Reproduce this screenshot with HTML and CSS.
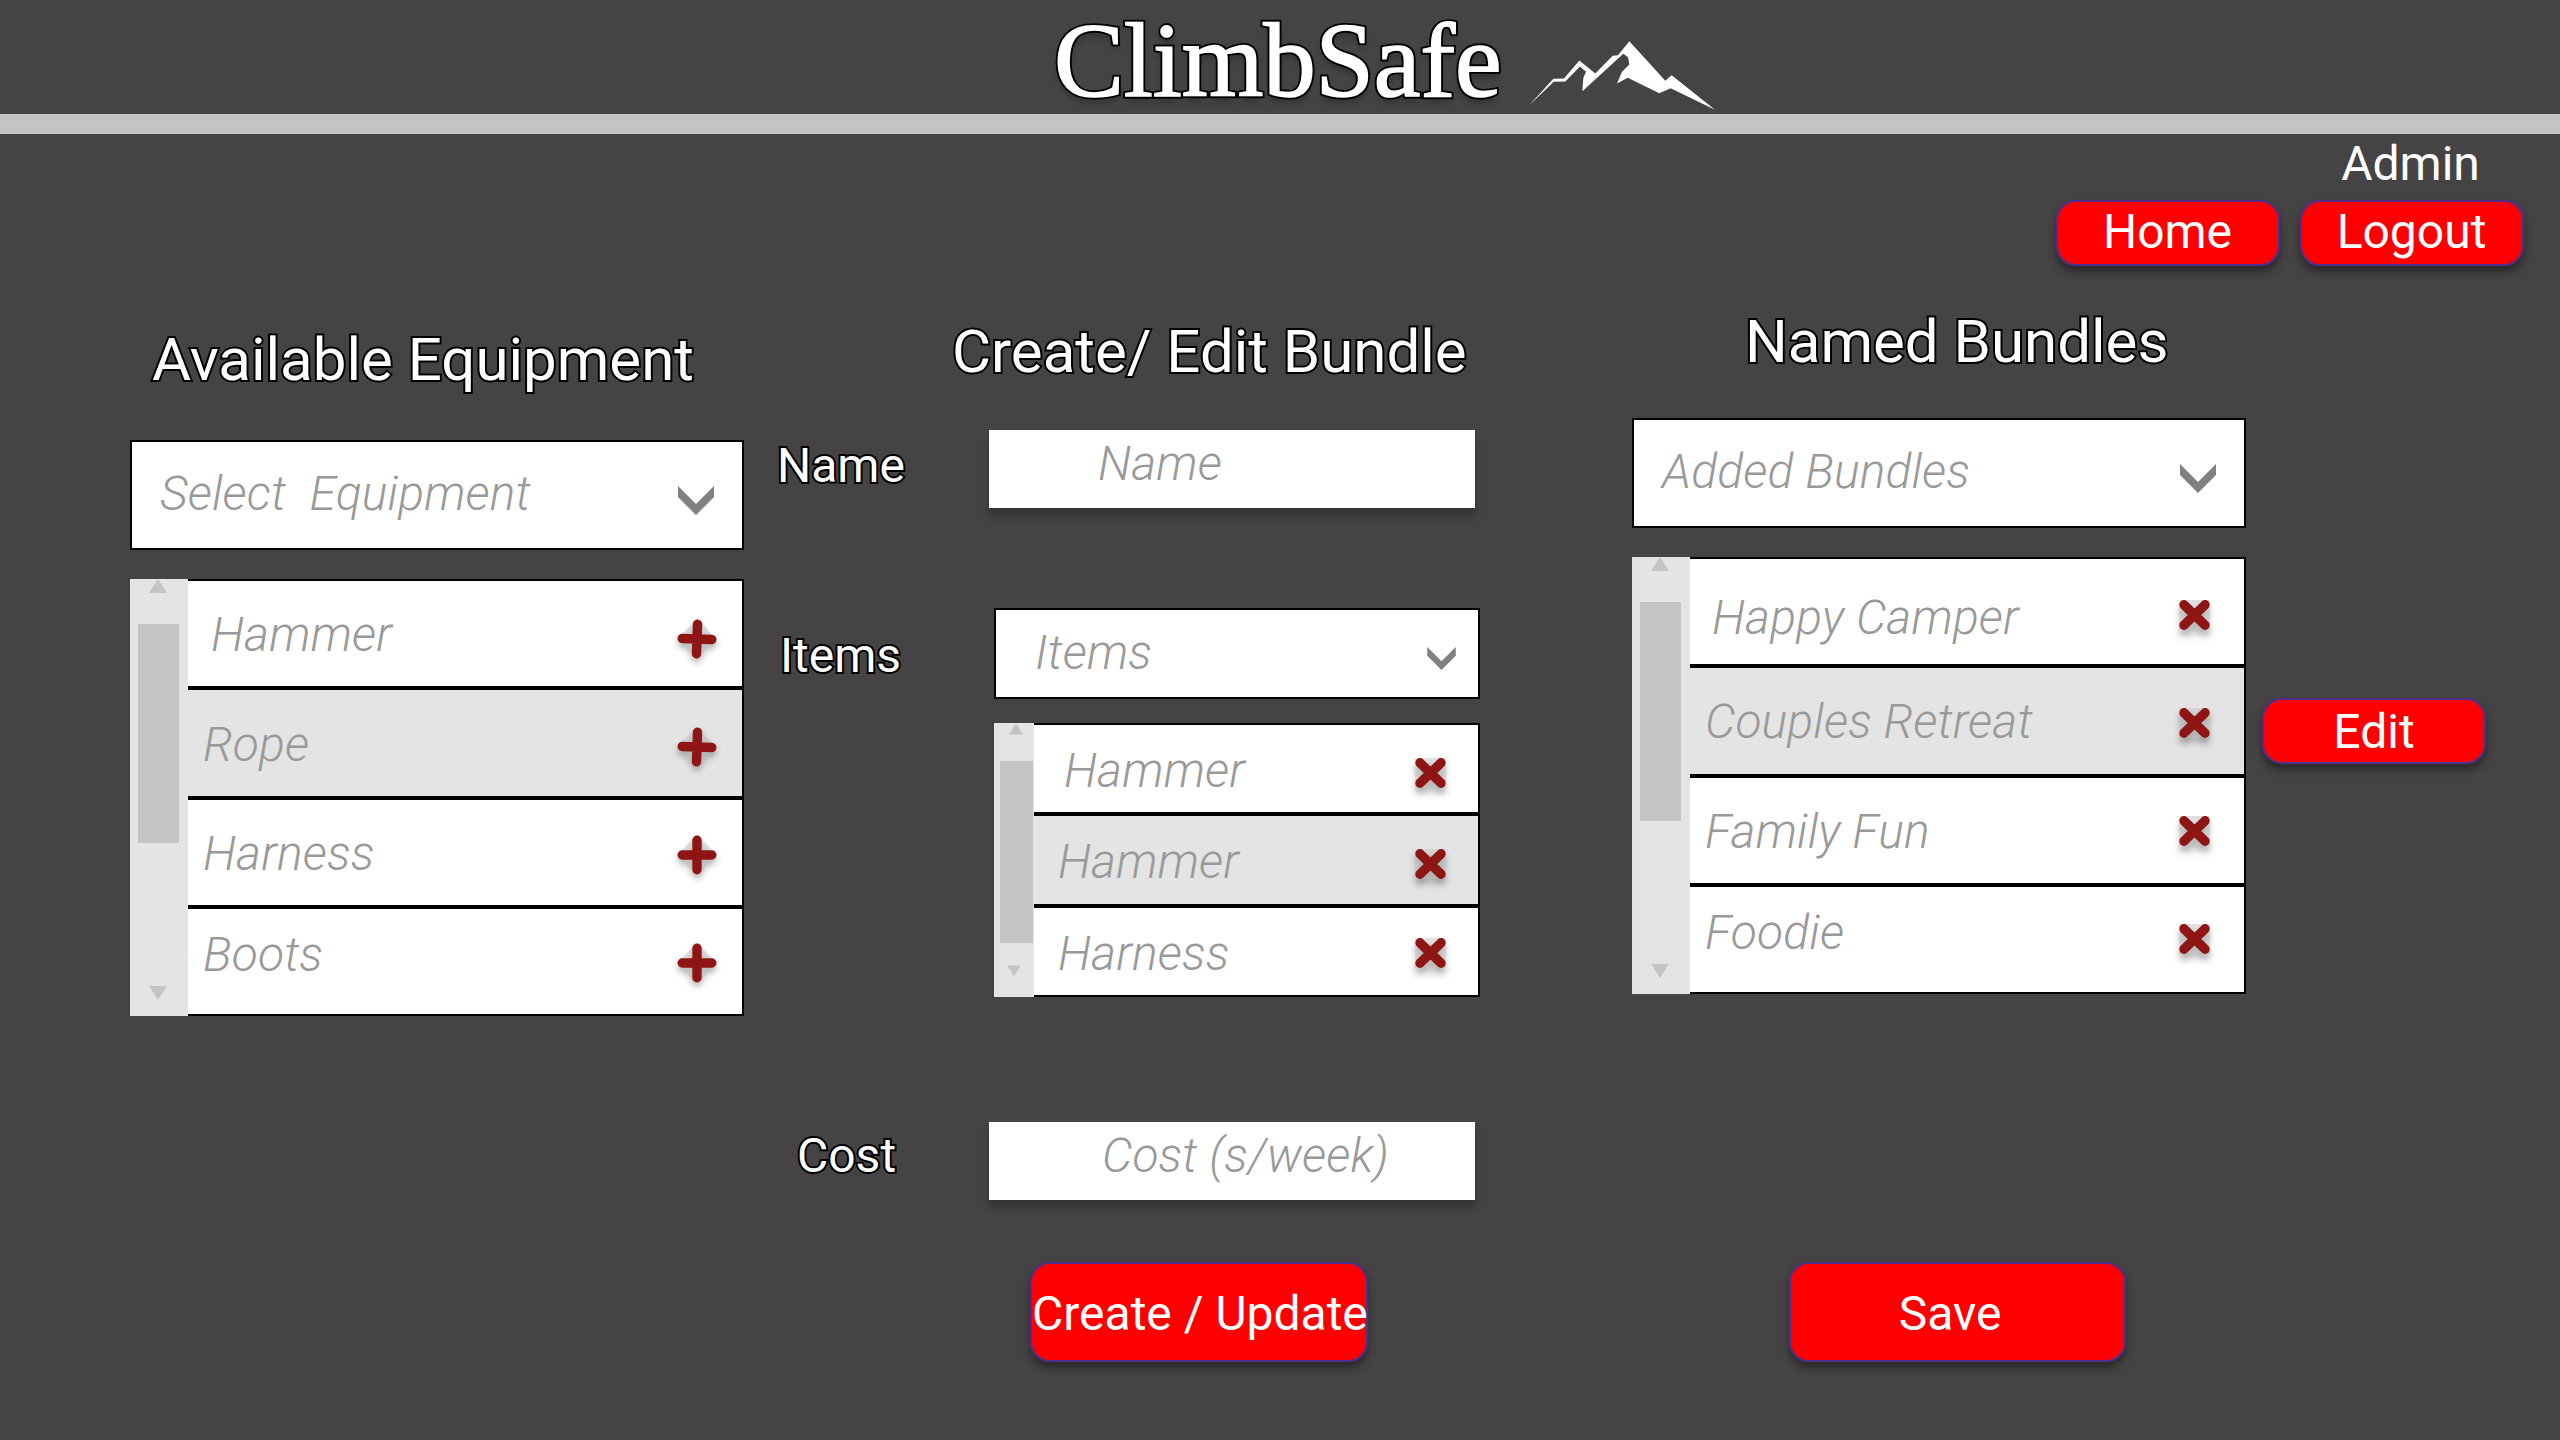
FILE: index.html
```html
<!DOCTYPE html>
<html lang="en">
<head>
<meta charset="utf-8">
<title>ClimbSafe</title>
<link rel="stylesheet" href="styles.css">
</head>
<body>
<svg class="sprite" aria-hidden="true">
  <symbol id="chevron" viewBox="0 0 36 29"><path d="M0 0 L18 18 L36 0 V11 L18 29 L0 11Z" fill="#808080"/></symbol>
  <symbol id="plus" viewBox="0 0 40 40"><path d="M20 0 L40 20 L20 40 L0 20Z" fill="#c4c4c4" fill-opacity=".5"/><path d="M20 5.2V34.8M5.2 20H34.8" stroke="#8f1515" stroke-width="9.4" stroke-linecap="round"/></symbol>
  <symbol id="cross" viewBox="0 0 31 30"><path d="M0 0H31V30H0Z" fill="#c4c4c4" fill-opacity=".5"/><path d="M5 4.8L26 25.2M26 4.8L5 25.2" stroke="#8f1515" stroke-width="9.4" stroke-linecap="round"/></symbol>
  <symbol id="arrow" viewBox="0 0 18 14"><path d="M9 0L18 14H0Z" fill="#c4c4c4"/></symbol>
</svg>
<header class="masthead">
  <h1 class="brand" data-name="ClimbSafe">ClimbSafe</h1>
  <svg class="mountain" viewBox="0 0 558 206"><path fill="#fff" transform="translate(-87 -65)" d="M87 258L160 178L192 177L238 123L286 162L338 109L354 107L388 65L496 184L515 167L645 271L512 206L478 221L383 175L351 192L366 157L388 135L384 113L370 103L247 215L250 175L258 157L240 141L196 186L161 187Z"/></svg>
</header>
<nav class="account">
  <button class="btn">Home</button>
  <div class="session">
    <span class="role">Admin</span>
    <button class="btn">Logout</button>
  </div>
</nav>
<main class="board">
  <section class="equipment">
    <h2>Available Equipment</h2>
    <div class="select"><span>Select&nbsp; Equipment</span><svg class="chev"><use href="#chevron"/></svg></div>
    <div class="list">
      <div class="scroll"><svg class="arrow"><use href="#arrow"/></svg><div class="thumb"></div><svg class="arrow down"><use href="#arrow"/></svg></div>
      <ul class="rows">
        <li><span>Hammer</span><svg class="plus tilt"><use href="#plus"/></svg></li>
        <li class="on"><span>Rope</span><svg class="plus tilt"><use href="#plus"/></svg></li>
        <li><span>Harness</span><svg class="plus"><use href="#plus"/></svg></li>
        <li><span>Boots</span><svg class="plus"><use href="#plus"/></svg></li>
      </ul>
    </div>
  </section>
  <section class="editor">
    <h2>Create/ Edit Bundle</h2>
    <div class="field"><label>Name</label><div class="input name">Name</div></div>
    <div class="field items">
      <label>Items</label>
      <div class="stack">
        <div class="select"><span>Items</span><svg class="chev"><use href="#chevron"/></svg></div>
        <div class="list">
          <div class="scroll"><svg class="arrow"><use href="#arrow"/></svg><div class="thumb"></div><svg class="arrow down"><use href="#arrow"/></svg></div>
          <ul class="rows">
            <li><span>Hammer</span><svg class="cross"><use href="#cross"/></svg></li>
            <li class="on"><span>Hammer</span><svg class="cross"><use href="#cross"/></svg></li>
            <li><span>Harness</span><svg class="cross"><use href="#cross"/></svg></li>
          </ul>
        </div>
      </div>
    </div>
    <div class="field cost"><label>Cost</label><div class="input price">Cost (s/week)</div></div>
    <button class="btn big create">Create / Update</button>
  </section>
  <section class="bundles">
    <h2>Named Bundles</h2>
    <div class="select"><span>Added Bundles</span><svg class="chev"><use href="#chevron"/></svg></div>
    <div class="list">
      <div class="scroll"><svg class="arrow"><use href="#arrow"/></svg><div class="thumb"></div><svg class="arrow down"><use href="#arrow"/></svg></div>
      <ul class="rows">
        <li><span>Happy Camper</span><svg class="cross"><use href="#cross"/></svg></li>
        <li class="on"><span>Couples Retreat</span><svg class="cross"><use href="#cross"/></svg></li>
        <li><span>Family Fun</span><svg class="cross"><use href="#cross"/></svg></li>
        <li><span>Foodie</span><svg class="cross"><use href="#cross"/></svg></li>
      </ul>
    </div>
    <button class="btn big save">Save</button>
  </section>
  <button class="btn edit">Edit</button>
</main>
</body>
</html>
```
FILE: styles.css
```css
* { box-sizing: border-box; }
body {
  margin: 0;
  width: 2560px;
  height: 1440px;
  overflow: hidden;
  background: #454344;
  color: #fff;
  font: 400 48px/56px Roboto, "Liberation Sans", sans-serif;
  white-space: nowrap;
}
svg { display: block; flex: none; }
.sprite { display: none; }

.masthead {
  display: flex;
  height: 134px;
  border-bottom: 20px solid #c4c4c4;
  padding-left: 1054px;
}
.brand {
  position: relative;
  z-index: 0;
  margin: 0;
  width: 476px;
  font: 400 105px/114px "Liberation Serif", serif;
  padding-top: 4px;
  letter-spacing: -0.2px;
  -webkit-text-stroke: 1.6px #fff;
}
/* dark outline and shadow behind the thickened wordmark */
.brand::before {
  content: attr(data-name);
  position: absolute;
  left: 0;
  z-index: -1;
  -webkit-text-stroke: 5.4px #000;
  text-shadow: 0 6px 6px rgba(0, 0, 0, .3);
}
.mountain { width: 186px; height: 69px; margin-top: 41px; margin-left: -1px; }

.account {
  display: flex;
  justify-content: flex-end;
  align-items: flex-end;
  gap: 20px;
  padding: 2px 36px 0 0;
  height: 132px;
}
.session { display: flex; flex-direction: column; align-items: center; gap: 8px; }
.role { margin-right: 3px; }

.btn {
  width: 224px;
  height: 66px;
  flex: none;
  padding: 0 1px 2px 0;
  border: 2px solid #4f2f8d;
  border-radius: 20px;
  background: #f00;
  color: #fff;
  font: inherit;
  line-height: 56px;
  box-shadow: 0 6px 8px rgba(0, 0, 0, .4);
}
.big { width: 338px; height: 100px; padding: 3px 0 0; }

.board { display: flex; align-items: flex-start; padding-left: 130px; }
h2 {
  margin: 0;
  font: 400 60px/70px Roboto, "Liberation Sans", sans-serif;
}
h2, label { -webkit-text-stroke: 4px #000; paint-order: stroke fill; }

.equipment { width: 614px; padding-top: 59px; }
.equipment h2 { padding-left: 22px; margin-bottom: 45px; }
.editor { width: 701px; margin-left: 35px; padding-top: 51px; }
.editor h2 { padding-left: 173px; margin-bottom: 43px; }
.bundles { width: 614px; margin-left: 152px; padding-top: 41px; }
.bundles h2 { padding-left: 113px; margin-bottom: 41px; }

.select, .input, .rows { color: #999; font-style: italic; font-weight: 300; letter-spacing: .15px; }
.select {
  display: flex;
  justify-content: space-between;
  height: 110px;
  padding: 24px 28px 0;
  border: 2px solid #000;
  background: #fff;
}
.chev { width: 36px; height: 29px; margin-top: 20px; }

.list { display: flex; height: 437px; margin-top: 29px; }
.scroll {
  display: flex;
  flex-direction: column;
  align-items: center;
  width: 58px;
  padding-right: 2px;
  background: #e4e4e4;
}
.arrow { width: 18px; height: 14px; margin-top: 0; }
.down { transform: rotate(180deg); margin-top: 143px; }
.thumb { width: 41px; height: 219px; margin-top: 31px; background: #c4c4c4; }
.rows {
  flex: 1;
  display: grid;
  grid-template-rows: 105.25fr 109.25fr 109.25fr 109.25fr;
  margin: 0;
  padding: 0;
  list-style: none;
  border: 2px solid #000;
  border-left: 0;
  background: #fff;
}
.rows li {
  display: flex;
  min-height: 0;
  justify-content: space-between;
  padding: 26px 25px 0 15px;
}
.rows li + li { border-top: 4px solid #000; }
.rows .on { background: #e4e4e4; }
.plus { width: 40px; height: 40px; margin-top: 12px; filter: drop-shadow(0 4px 3px rgba(0, 0, 0, .3)); }
.tilt use { transform: rotate(2deg); transform-origin: 20px 20px; }
.cross { width: 31px; height: 30px; filter: drop-shadow(0 6px 3px rgba(0, 0, 0, .3)); }
.equipment li:first-child { padding-left: 23px; }
.equipment li:nth-child(2) { padding-top: 27px; }
.equipment li:nth-child(2) .plus { margin-top: 10px; }
.equipment li:nth-child(3) .plus { margin-top: 9px; }
.equipment li:nth-child(4) { padding-top: 18px; }
.equipment li:nth-child(4) .plus { margin-top: 16px; }

.bundles li { padding: 26px 34px 0 15px; }
.bundles li:first-child { padding: 31px 34px 0 22px; }
.bundles .cross { margin-top: 12px; }
.bundles li:first-child .cross { margin-top: 10px; }
.bundles li:nth-child(2) .cross { margin-top: 14px; }
.bundles li:nth-child(4) { padding-top: 18px; }
.bundles li:nth-child(4) .cross { margin-top: 19px; }

.field { display: flex; }
.field label { width: 210px; flex: none; padding-top: 8px; }
.field:not(.items):not(.cost) label { margin-left: -2px; width: 212px; }
.input {
  width: 486px;
  height: 78px;
  padding: 6px 0 0 109px;
  background: #fff;
  box-shadow: 0 8px 8px rgba(0, 0, 0, .25);
}
.items { margin-top: 100px; }
.items label { padding: 20px 0 0 1px; }
.stack { width: 486px; margin-left: 5px; }
.stack .select { height: 91px; padding: 15px 22px 0 39px; }
.stack .chev { width: 29px; height: 23px; margin-top: 22px; }
.stack .list { height: 274px; margin-top: 24px; }
.stack .scroll { width: 40px; padding: 0; }
.stack .arrow { width: 14px; height: 12px; margin-left: 4px; }
.stack .thumb { width: 33px; height: 182px; margin: 26px 0 0 5px; }
.stack .down { margin: 22px 0 0; }
.stack .rows { grid-template-rows: 87.33fr 91.33fr 91.33fr; }
.stack li { padding: 18px 32px 0 24px; }
.stack li:first-child { padding-left: 30px; }
.stack .cross { margin-top: 15px; }
.stack li:nth-child(3) .cross { margin-top: 12px; }
.cost { margin-top: 125px; }
.cost label { padding-left: 18px; padding-top: 6px; }
.price { padding-left: 113px; }
.create { display: block; margin: 62px 0 0 251px; }
.save { display: block; width: 337px; margin: 268px 0 0 157px; padding-right: 15px; }
.edit { margin: 432px 0 0 16px; padding: 1px 0 0; }
```
